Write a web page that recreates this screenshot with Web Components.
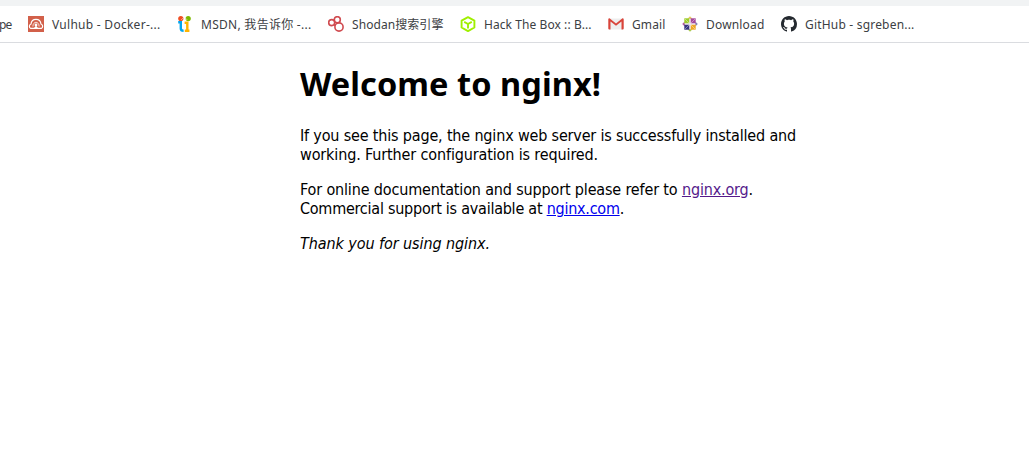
<!DOCTYPE html>
<html lang="en">
<head>
<meta charset="utf-8">
<title>Welcome to nginx!</title>
<style>
html,body{margin:0;background:#fff;height:100%;overflow:hidden}
</style>
</head>
<body>
<browser-page></browser-page>
<script>
const ICONS = {
vulhub:`<rect width="16" height="16" fill="#d2604a"/><path d="M2.600 12.300C.8 11.800 1 8.500 3 8C3.400 4.600 5 3.300 8 3.300s4.600 1.300 5 4.700c2 .5 2.200 3.800.4 4.300z" fill="none" stroke="#fff" stroke-width="1.200"/><path d="M4.900 10.500C4.900 4.900 11.100 4.900 11.100 10.500" fill="none" stroke="#fff" stroke-opacity=".8" stroke-width="1"/><circle cx="8" cy="8.900" r="1.400" fill="#fff"/><path d="M5.800 12.300l2.200-2.800 2.200 2.800z" fill="#fff"/>`,
msdn:`<circle cx="3.800" cy="2.600" r="2.600" fill="#f04e23"/><circle cx="11.200" cy="2.600" r="2.600" fill="#7db900"/><path d="M1.200 6.300H3.800V12.500Q3.800 14.800 6.600 14.800" fill="none" stroke="#00a6ef" stroke-width="2.400"/><path d="M7.600 6.800H10.300V14.600M7.800 14.800H12.400" fill="none" stroke="#ffb400" stroke-width="2.400"/><path d="M4.600 3.500l1-1M9.800 3.500l-1-1" stroke="#fff" stroke-width="1"/>`,
shodan:`<g fill="none" stroke="#d04b50" stroke-width="1.600"><circle cx="9.300" cy="3.700" r="3"/><circle cx="3.700" cy="6.600" r="3"/><circle cx="11" cy="11" r="4.100"/><path d="M5.800 8.700l1.500 1"/></g>`,
box:`<g fill="none" stroke="#9fef00" stroke-width="1.900" stroke-linejoin="round"><path d="M8 1.100l6.400 3.500v6.900L8 15.100l-6.400-3.600V4.600z"/><path d="M4.200 5.900L8 8l3.800-2.100M8 8v4.500"/></g>`,
gmail:`<path d="M.8 2.500h14.400v11H.8z" fill="#eee"/><path d="M.3 3.200Q.3 2.200 1.500 2.200L8 7.500l6.500-5.300q1.200 0 1.200 1v9.300q0 1-1 1h-1.200V5.500L8 9.700 2.500 5.500v8H1.300q-1 0-1-1z" fill="#d9443a"/>`,
centos:`<path d="M8 .2l2.500 2.500h-5z" fill="#e8c55a"/><path d="M15.800 8l-2.500 2.500v-5z" fill="#7f80b5"/><path d="M8 15.800l-2.500-2.500h5z" fill="#a9c94e"/><path d="M.2 8l2.500-2.500v5z" fill="#b45aa0"/><path d="M2.300 2.300h5.200v5.200H2.300z" fill="#9ccd2a"/><path d="M8.500 2.300h5.200v5.200H8.500z" fill="#a5489a"/><path d="M2.300 8.500h5.200v5.200H2.300z" fill="#35357f"/><path d="M8.500 8.500h5.200v5.200H8.500z" fill="#efa724"/><path d="M3 3l10 10M13 3L3 13" stroke="#fff" stroke-opacity=".5" stroke-width=".8"/><path d="M8 3v10M3 8h10" stroke="#e9dfe9" stroke-width="1"/>`,
github:`<path fill="#24292f" d="M8 0C3.580 0 0 3.580 0 8c0 3.540 2.290 6.530 5.470 7.590.4.070.55-.17.55-.38 0-.19-.01-.82-.01-1.490-2.010.37-2.530-.49-2.690-.94-.09-.23-.48-.94-.82-1.130-.28-.15-.68-.52-.01-.53.63-.01 1.080.58 1.230.82.72 1.210 1.870.87 2.330.66.070-.52.28-.87.51-1.070-1.780-.2-3.640-.89-3.640-3.950 0-.87.31-1.590.82-2.150-.08-.2-.36-1.020.08-2.120 0 0 .67-.21 2.200.82.64-.18 1.320-.27 2-.27s1.360.09 2 .27c1.530-1.040 2.200-.82 2.200-.82.44 1.100.16 1.920.08 2.120.51.56.82 1.270.82 2.150 0 3.070-1.870 3.750-3.650 3.950.29.25.54.73.54 1.480 0 1.070-.01 1.930-.01 2.200 0 .21.15.46.55.38A8.010 8.010 0 0 0 16 8c0-4.420-3.580-8-8-8z"/>`
};
/* Spreads one line of text over the given width. */
class FitLine extends HTMLElement {
  connectedCallback(){
    this.attachShadow({mode:'open'}).innerHTML =
      `<style>:host{display:block;white-space:nowrap}span{display:inline-block}
      ::slotted(a){color:#00e;text-decoration:underline}::slotted(a.visited){color:#551a8b}</style><span><slot></slot></span>`;
    const s = this.shadowRoot.querySelector('span'), w = +this.getAttribute('width');
    const n = this.textContent.length;
    s.style.letterSpacing = (w - s.getBoundingClientRect().width) / n + 'px';
  }
}
class BookmarkItem extends HTMLElement {
  connectedCallback(){
    const icon = this.getAttribute('icon'), w = this.getAttribute('width');
    this.attachShadow({mode:'open'}).innerHTML =
      `<style>:host{display:flex;align-items:center;gap:8px;flex:none}
      svg{width:16px;height:16px;flex:none;display:block}
      fit-line{width:${w}px;padding-top:2px}</style>
      ${icon ? `<svg viewBox="0 0 16 16">${ICONS[icon]}</svg>` : ''}
      <fit-line width="${w - .5}">${this.getAttribute('label')}</fit-line>`;
  }
}
class BookmarksBar extends HTMLElement {
  connectedCallback(){
    this.attachShadow({mode:'open'}).innerHTML =
      `<style>:host{display:flex;align-items:center;gap:16px;box-sizing:border-box;height:43px;
      border-top:6px solid #f1f3f4;border-bottom:1px solid #dadce0;background:#fff;
      color:#3c4043;font:12px/18px "Noto Sans","Noto Sans CJK SC",sans-serif}</style>
      <bookmark-item label="pe" width="13" style="margin-left:-1px"></bookmark-item>
      <bookmark-item icon="vulhub" label="Vulhub - Docker-..." width="109"></bookmark-item>
      <bookmark-item icon="msdn" label="MSDN, 我告诉你 -..." width="111"></bookmark-item>
      <bookmark-item icon="shodan" label="Shodan搜索引擎" width="92"></bookmark-item>
      <bookmark-item icon="box" label="Hack The Box :: B..." width="108"></bookmark-item>
      <bookmark-item icon="gmail" label="Gmail" width="34"></bookmark-item>
      <bookmark-item icon="centos" label="Download" width="59"></bookmark-item>
      <bookmark-item icon="github" label="GitHub - sgreben..." width="110"></bookmark-item>`;
  }
}
class NginxWelcome extends HTMLElement {
  connectedCallback(){
    this.attachShadow({mode:'open'}).innerHTML =
      `<style>:host{display:block;width:560px;margin-left:300px;
      color:#000;font:16px/19px "DejaVu Sans Condensed","DejaVu Sans",sans-serif}
      h1{font-family:"Noto Sans",sans-serif;font-size:32.500px;line-height:39px;margin:21px 0 23px;font-weight:bold}
      p{margin:0 0 16px}</style>
      <h1><fit-line width="301">Welcome to nginx!</fit-line></h1>
      <p><fit-line width="496">If you see this page, the nginx web server is successfully installed and</fit-line>
      <fit-line width="298">working. Further configuration is required.</fit-line></p>
      <p><fit-line width="453">For online documentation and support please refer to <a class="visited">nginx.org</a>.</fit-line>
      <fit-line width="324">Commercial support is available at <a>nginx.com</a>.</fit-line></p>
      <p><em><fit-line width="190">Thank you for using nginx.</fit-line></em></p>`;
  }
}
class BrowserPage extends HTMLElement {
  connectedCallback(){
    this.attachShadow({mode:'open'}).innerHTML =
      `<style>:host{display:flow-root}</style><bookmarks-bar></bookmarks-bar><nginx-welcome></nginx-welcome>`;
  }
}
customElements.define('fit-line', FitLine);
customElements.define('bookmark-item', BookmarkItem);
customElements.define('bookmarks-bar', BookmarksBar);
customElements.define('nginx-welcome', NginxWelcome);
customElements.define('browser-page', BrowserPage);
</script>
</body>
</html>
